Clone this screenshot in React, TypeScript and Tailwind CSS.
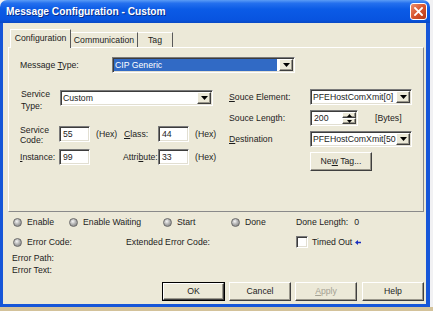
import clsx from 'clsx';
import type { ReactNode } from 'react';

const sunken =
  'border border-t-[#7a7a7a] border-l-[#7a7a7a] border-b-white border-r-white bg-white shadow-[inset_1px_1px_0_#3c3c3c,inset_-1px_-1px_0_#e2dfd2]';
const raised =
  'border border-t-white border-l-white border-b-[#3f3f3f] border-r-[#3f3f3f] bg-[#ece9d8] shadow-[inset_-1px_-1px_0_#9a978b]';

const Arrow = () => (
  <svg width="7" height="4" viewBox="0 0 7 4">
    <path d="M0 0H7L3.5 4Z" fill="#000" />
  </svg>
);

const DropButton = () => (
  <div className={clsx('flex h-full w-[14px] shrink-0 items-center justify-center', raised)}>
    <Arrow />
  </div>
);

interface ComboProps {
  value: string;
  className?: string;
  highlighted?: boolean;
}

const Combo = ({ value, className, highlighted }: ComboProps) => (
  <div className={clsx('flex h-[16px] p-[1px]', sunken, className)}>
    <div
      className={clsx(
        'flex flex-1 items-center overflow-hidden whitespace-nowrap pl-[1px]',
        highlighted && 'mr-[2px] bg-[#316ac5] text-white',
      )}
    >
      {value}
    </div>
    <DropButton />
  </div>
);

const Field = ({ value, className }: { value: string; className?: string }) => (
  <div className={clsx('flex h-[16px] items-center pl-[3px]', sunken, className)}>{value}</div>
);

const Spinner = () => (
  <div className={clsx('flex h-[16px] w-[48px] p-[1px]', sunken)}>
    <div className="flex flex-1 items-center pl-[2px]">200</div>
    <div className="flex w-[14px] flex-col">
      <div className={clsx('flex flex-1 items-center justify-center', raised)}>
        <svg width="5" height="3" viewBox="0 0 5 3">
          <path d="M0 3H5L2.5 0Z" fill="#000" />
        </svg>
      </div>
      <div className={clsx('flex flex-1 items-center justify-center', raised)}>
        <svg width="5" height="3" viewBox="0 0 5 3">
          <path d="M0 0H5L2.5 3Z" fill="#000" />
        </svg>
      </div>
    </div>
  </div>
);

const Button = ({
  children,
  className,
  isDefault,
}: {
  children: ReactNode;
  className?: string;
  isDefault?: boolean;
}) =>
  isDefault ? (
    <div className={clsx('flex h-[19px] border border-black', className)}>
      <div className={clsx('flex flex-1 items-center justify-center', raised)}>
        <span>{children}</span>
      </div>
    </div>
  ) : (
    <div className={clsx('flex h-[19px] items-center justify-center', raised, className)}>
      <span>{children}</span>
    </div>
  );

const Led = () => (
  <span className="h-[9px] w-[9px] shrink-0 rounded-full border border-[#6a6a6a] bg-[radial-gradient(circle_at_40%_35%,#f6f6f6_0%,#b4b4b4_45%,#747474_100%)]" />
);

const Status = ({ label, className }: { label: string; className?: string }) => (
  <div className={clsx('flex items-center gap-[5px]', className)}>
    <Led />
    <span>{label}</span>
  </div>
);

const U = ({ children }: { children: ReactNode }) => (
  <u className="decoration-[1px] underline-offset-[1px]">{children}</u>
);

export default function App() {
  return (
    <div className="h-[311px] w-[433px] overflow-hidden bg-[#f1f1f3] font-['Liberation_Sans',Arial,sans-serif] text-[8.7px] leading-[11px] text-[#1c1c1c]">
      <div className="flex h-[307px] w-[430px] flex-col">
        {/* title bar */}
        <div className="flex h-[23px] shrink-0 items-center rounded-t-[7px] bg-[linear-gradient(to_bottom,#5b9cf6_0%,#2470ee_14%,#0b5be6_40%,#0854e0_85%,#0a49c4_100%)] pl-[6px] pr-[3px]">
          <span className="text-[10.2px] font-bold text-white [text-shadow:1px_1px_0_#0a2f8a]">
            Message Configuration - Custom
          </span>
          <div className="ml-auto flex h-[17px] w-[17px] items-center justify-center rounded-[3px] border border-white bg-[linear-gradient(135deg,#ec8e6c_0%,#d8552f_50%,#b63a18_100%)]">
            <svg width="9" height="9" viewBox="0 0 9 9">
              <path d="M1 1L8 8M8 1L1 8" stroke="#fff" strokeWidth="1.8" strokeLinecap="square" />
            </svg>
          </div>
        </div>

        {/* body */}
        <div className="flex flex-1 flex-col border-b-[3px] border-l-[3px] border-r-[4px] border-[#1656d8] bg-[#ece9d8]">
          {/* tabs */}
          <div className="ml-[5px] mt-[6px] flex h-[18px] items-end">
            <div className="relative z-10 -mb-px ml-[2px] flex h-[19px] w-[61px] items-center justify-center border-l border-r border-t border-l-white border-r-[#5a5a5a] border-t-white bg-[#ece9d8] pb-[2px]">
              Configuration
            </div>
            <div className="flex h-[15px] w-[67px] items-center justify-center border-r border-t border-r-[#5a5a5a] border-t-white bg-[#ece9d8]">
              Communication
            </div>
            <div className="flex h-[15px] w-[35px] items-center justify-center border-r border-t border-r-[#5a5a5a] border-t-white bg-[#ece9d8]">
              Tag
            </div>
          </div>

          {/* panel */}
          <div className="ml-[5px] flex h-[165px] w-[416px] flex-col border border-b-[#8a8a8a] border-l-white border-r-[#8a8a8a] border-t-white pl-[11px]">
            <div className="mt-[9px] flex h-[16px] items-center">
              <span className="w-[92px]">
                Message <U>T</U>ype:
              </span>
              <Combo value="CIP Generic" highlighted className="w-[183px]" />
            </div>

            <div className="mt-[16px] flex">
              {/* left column */}
              <div className="flex w-[209px] flex-col">
                <div className="flex items-start">
                  <span className="ml-[1px] w-[39px] leading-[11.5px]">
                    Service
                    <br />
                    Type:
                  </span>
                  <Combo value="Custom" className="mt-[1px] w-[153px]" />
                </div>

                <div className="mt-[13px] flex items-start">
                  <span className="w-[39px] leading-[10px]">
                    Service
                    <br />
                    Code:
                  </span>
                  <div className="mt-[1px] flex h-[16px] items-center">
                    <Field value="55" className="w-[31px]" />
                    <span className="ml-[6px] w-[28px]">(Hex)</span>
                    <span className="w-[34px]">
                      <U>C</U>lass:
                    </span>
                    <Field value="44" className="w-[31px]" />
                    <span className="ml-[6px]">(Hex)</span>
                  </div>
                </div>

                <div className="mt-[4px] flex h-[16px] items-center">
                  <span className="w-[39px]">
                    <U>I</U>nstance:
                  </span>
                  <Field value="99" className="w-[31px]" />
                  <span className="ml-[33px] w-[35px]">
                    Attri<U>b</U>ute:
                  </span>
                  <Field value="33" className="w-[31px]" />
                  <span className="ml-[6px]">(Hex)</span>
                </div>
              </div>

              {/* right column */}
              <div className="flex flex-col">
                <div className="flex h-[16px] items-center">
                  <span className="w-[81px]">
                    <U>S</U>ouce Element:
                  </span>
                  <Combo value="PFEHostComXmit[0]" className="w-[102px]" />
                </div>
                <div className="mt-[5px] flex h-[16px] items-center">
                  <span className="w-[81px]">
                    Souce Len<U>g</U>th:
                  </span>
                  <Spinner />
                  <span className="ml-[17px]">[Bytes]</span>
                </div>
                <div className="mt-[5px] flex h-[16px] items-center">
                  <span className="w-[81px]">
                    <U>D</U>estination
                  </span>
                  <Combo value="PFEHostComXmit[50" className="w-[102px]" />
                </div>
                <Button className="ml-[81px] mt-[5px] h-[18px] w-[62px]">
                  Ne<U>w</U> Tag...
                </Button>
              </div>
            </div>
          </div>

          {/* status */}
          <div className="ml-[10px] mt-[4px] flex h-[12px] items-center">
            <Status label="Enable" className="w-[56px]" />
            <Status label="Enable Waiting" className="w-[94px]" />
            <Status label="Start" className="w-[68px]" />
            <Status label="Done" className="w-[65px]" />
            <span>
              Done Length:<span className="ml-[6px]">0</span>
            </span>
          </div>

          <div className="ml-[10px] mt-[8px] flex h-[12px] items-center">
            <Status label="Error Code:" className="w-[113px]" />
            <span className="w-[170px]">Extended Error Code:</span>
            <span className={clsx('h-[12px] w-[12px]', sunken)} />
            <span className="ml-[4px]">Timed Out</span>
            <svg className="ml-[3px]" width="6" height="5" viewBox="0 0 6 5">
              <path d="M0 2.5L3 0V1.8H6V3.2H3V5Z" fill="#1b2fbf" />
            </svg>
          </div>

          <div className="ml-[9px] mt-[5px] flex flex-col leading-[11.7px]">
            <span>Error Path:</span>
            <span>Error Text:</span>
          </div>

          <div className="ml-[159px] mt-[6px] flex">
            <Button isDefault className="w-[63px]">
              OK
            </Button>
            <Button className="ml-[4px] w-[62px]">Cancel</Button>
            <Button className="ml-[4px] w-[62px] text-[#a5a294]">
              <U>A</U>pply
            </Button>
            <Button className="ml-[5px] w-[62px]">Help</Button>
          </div>
        </div>
      </div>
      <div className="h-[4px] bg-[#d3c29a]" />
    </div>
  );
}
